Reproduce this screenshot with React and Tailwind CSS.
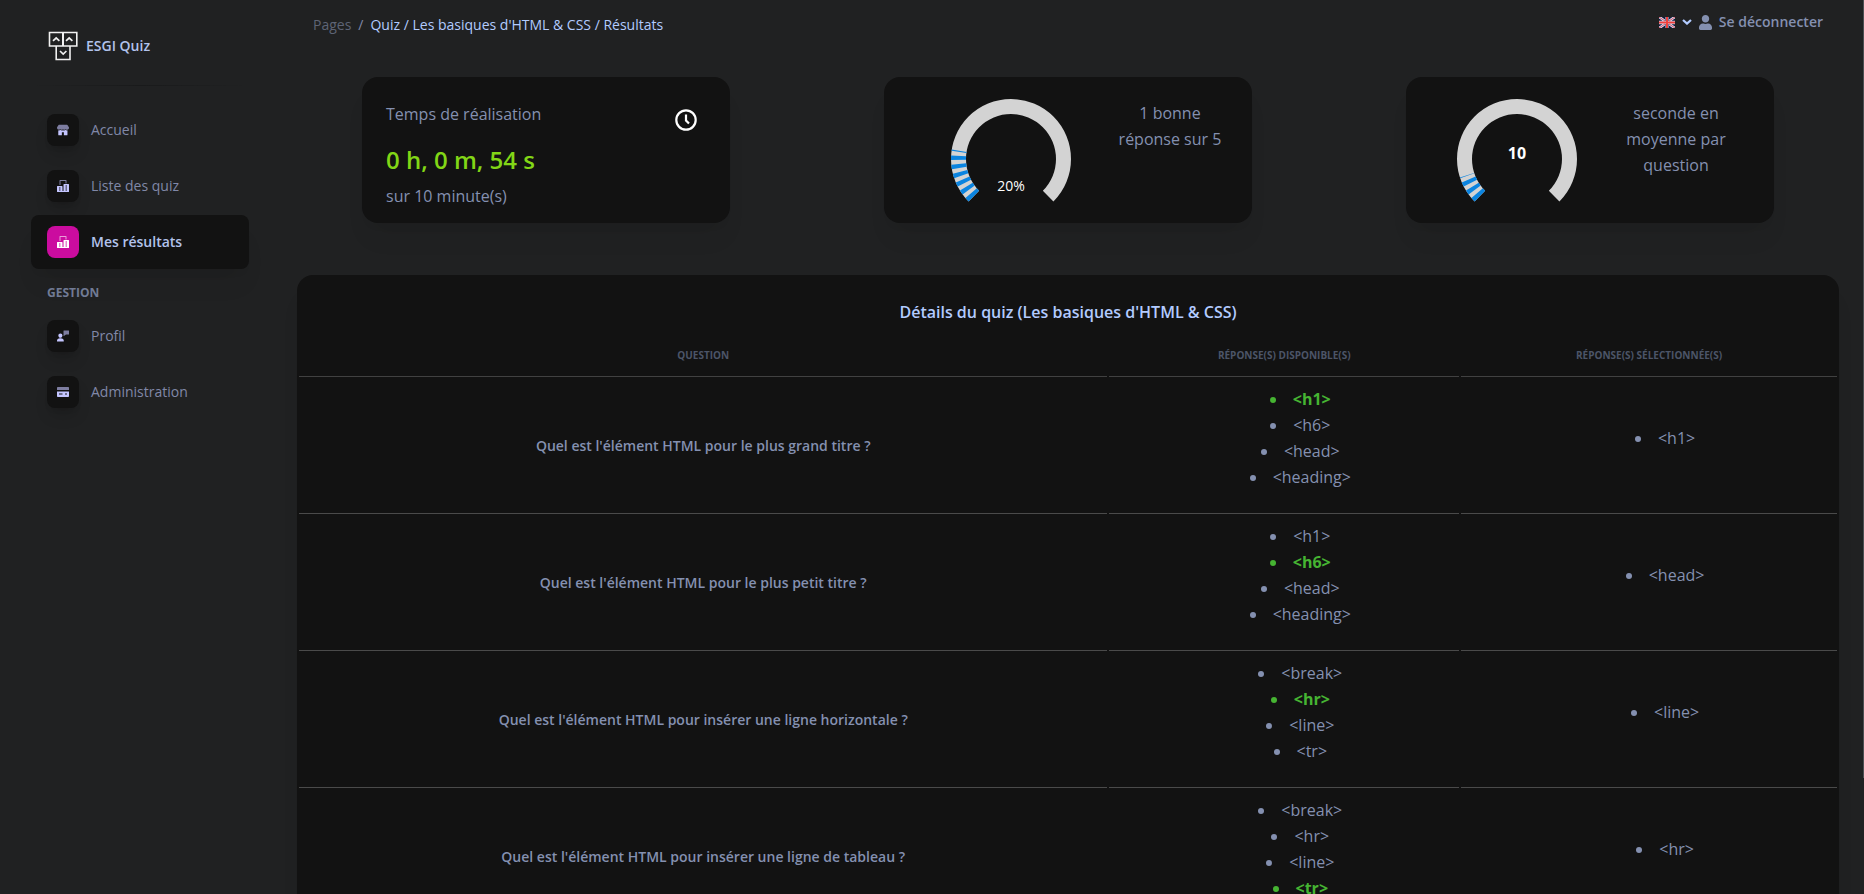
import React from "react";

const Shop = () => (
  <svg viewBox="0 0 47 42" className="size-3" aria-hidden="true">
    <path fill="#c4c5ff" opacity="0.6" d="M46.7 10.7 40.8 1A2 2 0 0 0 39 0H7.7A2 2 0 0 0 6 1L.3 10.7A2 2 0 0 0 0 11.7C0 16 3.4 19.6 7.8 19.6A8 8 0 0 0 13 17.8a8 8 0 0 0 10.4 0 8 8 0 0 0 10.4 0A7.8 7.8 0 0 0 47 11.7z" />
    <path fill="#c4c5ff" d="M39.2 22.5a12 12 0 0 1-5.5-1.3 12 12 0 0 1-10.3.6 12 12 0 0 1-10.4-.6 12 12 0 0 1-5.2 1.3A12 12 0 0 1 5 22.2V40a2 2 0 0 0 2 2h12V29.4h8V42h12a2 2 0 0 0 2-2V22.2z" />
  </svg>
);

const Office = ({ color }) => (
  <svg viewBox="0 0 42 42" className="size-3" fill={color} aria-hidden="true">
    <path opacity="0.6" d="M12.25 17.5H8.75V1.75C8.75.78 9.53 0 10.5 0H31.5C32.47 0 33.25.78 33.25 1.75V12.25H29.75V3.5H12.25z" />
    <path d="M40.25 14H24.5a1.75 1.75 0 0 0-1.75 1.75V38.5H19.25V22.75A1.75 1.75 0 0 0 17.5 21H1.75A1.75 1.75 0 0 0 0 22.75V40.25A1.75 1.75 0 0 0 1.75 42H40.25A1.75 1.75 0 0 0 42 40.25V15.75A1.75 1.75 0 0 0 40.25 14zM12.25 36.75H7V33.25H12.25zM12.25 29.75H7V26.25H12.25zM35 36.75H29.75V33.25H35zM35 29.75H29.75V26.25H35zM35 22.75H29.75V19.25H35z" />
  </svg>
);

const Support = () => (
  <svg viewBox="0 0 46 42" className="size-3" fill="#c4c5ff" aria-hidden="true">
    <path opacity="0.6" d="M45 0H26a1 1 0 0 0-1 1V20a1 1 0 0 0 1.6.8L34.3 15H45a1 1 0 0 0 1-1V1a1 1 0 0 0-1-1z" />
    <path d="M22.9 32.9C20.9 31.3 17.7 30 13 30S5 31.3 3.1 32.9A8.7 8.7 0 0 0 0 39.5V41a1 1 0 0 0 1 1H25a1 1 0 0 0 1-1V39.5A8.7 8.7 0 0 0 22.9 32.9zM13 28c4.4 0 8-4.6 8-9a8 8 0 0 0-16 0c0 4.4 3.6 9 8 9z" />
  </svg>
);

const Card = () => (
  <svg viewBox="0 0 43 36" className="size-3" fill="#c4c5ff" aria-hidden="true">
    <path opacity="0.6" d="M43 10.7V3.6C43 1.6 41.4 0 39.4 0H3.6C1.6 0 0 1.6 0 3.6V10.7z" />
    <path d="M0 16.1V32.3C0 34.3 1.6 35.8 3.6 35.8H39.4C41.4 35.8 43 34.3 43 32.3V16.1zM19.7 26.9H7.2V23.3H19.7zM35.8 26.9H28.7V23.3H35.8z" />
  </svg>
);

const Logo = () => (
  <svg viewBox="0 0 30 30" className="size-[30px]" fill="none" stroke="#f1f1f1" aria-hidden="true">
    <path strokeWidth="1.6" d="M1.5 1.5H14.8V15H1.5zM15.2 1.5H28.8V15H15.2zM8.2 15H22V28.5H8.2z" />
    <path strokeWidth="1.7" d="M5 9.8 8.2 7 11.4 9.8M18 9.8 21.2 7 24.4 9.8M12 20 15.2 23 18.4 20" />
  </svg>
);

const Flag = () => (
  <svg viewBox="0 0 16 11" className="h-[11px] w-4" aria-hidden="true">
    <path fill="#d3dcf5" d="M0 0H16V11H0z" />
    <path fill="#131a3a" d="M2.5 0H6V2.6zM10 2.6V0H13.5zM0 1.4V3.8H3.5zM16 1.4V3.8H12.5zM0 9.6V7.2H3.5zM16 9.6V7.2H12.5zM2.5 11H6V8.4zM10 8.4V11H13.5z" />
    <path stroke="#e03038" strokeWidth="0.8" d="M0 0 6 4M16 0 10 4M0 11 6 7M16 11 10 7" />
    <path fill="#131a3a" d="M6 0H7V4H6zM9 0H10V4H9zM6 7H7V11H6zM9 7H10V11H9z" opacity="0.5" />
    <path fill="#f0403c" d="M7 0H9V11H7zM0 4.5H16V6.5H0z" />
  </svg>
);

const NAV = [
  { label: "Accueil", icon: <Shop /> },
  { label: "Liste des quiz", icon: <Office color="#c4c5ff" /> },
  { label: "Mes résultats", icon: <Office color="#ffffff" />, active: true },
];
const MANAGE = [
  { label: "Profil", icon: <Support /> },
  { label: "Administration", icon: <Card /> },
];

function NavItem({ label, icon, active }) {
  return (
    <li>
      <a
        href="#"
        aria-current={active ? "page" : undefined}
        className={
          active
            ? "flex h-[54px] items-center gap-3 rounded-lg bg-[#121212] px-4 font-semibold text-[#b2c3ec] shadow-xl shadow-black/5"
            : "flex h-[54px] items-center gap-3 rounded-lg px-4 text-[#8088a8]"
        }
      >
        <span
          className={
            active
              ? "flex size-8 items-center justify-center rounded-lg bg-[#cb0c9f]"
              : "flex size-8 items-center justify-center rounded-lg bg-[#121212] shadow-lg shadow-black/15"
          }
        >
          {icon}
        </span>
        {label}
      </a>
    </li>
  );
}

const point = (r, deg) => {
  const a = (deg * Math.PI) / 180;
  return `${(60 + r * Math.cos(a)).toFixed(2)} ${(60 + r * Math.sin(a)).toFixed(2)}`;
};
const arc = (from, to) =>
  `M${point(60, from)}A60 60 0 ${to - from > 180 ? 1 : 0} 1 ${point(60, to)}L${point(45, to)}A45 45 0 ${to - from > 180 ? 1 : 0} 0 ${point(45, from)}z`;

function Gauge({ value, children }) {
  const end = 135 + 270 * value;
  const stripes = [];
  for (let a = 135; a < end; a += 8.8) stripes.push(arc(a, Math.min(a + 4.4, end)));
  return (
    <svg viewBox="0 0 120 120" className="size-[120px] shrink-0" role="img">
      <path fill="#d3d3d3" d={arc(135, 405)} />
      <path fill="#0a84e0" d={stripes.join("")} />
      {children}
    </svg>
  );
}

const STAT = "h-[146px] w-[368px] rounded-2xl bg-[#121212] shadow-xl shadow-black/5";

const ROWS = [
  { q: "Quel est l'élément HTML pour le plus grand titre ?", a: ["<h1>", "<h6>", "<head>", "<heading>"], ok: 0, s: "<h1>" },
  { q: "Quel est l'élément HTML pour le plus petit titre ?", a: ["<h1>", "<h6>", "<head>", "<heading>"], ok: 1, s: "<head>" },
  { q: "Quel est l'élément HTML pour insérer une ligne horizontale ?", a: ["<break>", "<hr>", "<line>", "<tr>"], ok: 1, s: "<line>" },
  { q: "Quel est l'élément HTML pour insérer une ligne de tableau ?", a: ["<break>", "<hr>", "<line>", "<tr>"], ok: 3, s: "<hr>" },
];

const TH = "border-b border-[#414141] pt-2 pb-[13px] text-[10px] leading-4 font-bold text-[#4c5568] uppercase";
const TD = "border-b border-[#4a4a4a] py-[7px] align-middle";

export default function App() {
  return (
    <div className="relative flex h-screen overflow-hidden bg-[#202122] font-['Open_Sans',sans-serif] text-[#8490b0]">
      <aside className="w-[281px] shrink-0 pr-8 pl-[31px] text-sm">
        <a href="#" className="flex items-center gap-2 pt-[31px] pl-[17px] font-semibold text-[#b2c3ec]">
          <Logo />
          ESGI Quiz
        </a>
        <hr className="mt-6 h-px border-0 bg-linear-to-r from-transparent via-[#191a1b] to-transparent" />
        <ul className="mt-[17px] flex flex-col gap-0.5">
          {NAV.map((n) => (
            <NavItem key={n.label} {...n} />
          ))}
        </ul>
        <h6 className="mt-4 pl-4 text-xs leading-4 font-bold text-[#717b95] uppercase">Gestion</h6>
        <ul className="mt-2 flex flex-col gap-0.5">
          {MANAGE.map((n) => (
            <NavItem key={n.label} {...n} />
          ))}
        </ul>
      </aside>

      <main className="min-w-0 flex-1 pr-[25px] pl-4">
        <nav className="flex justify-between px-4 pt-3 text-sm">
          <ol className="flex gap-[7px] leading-[26px]">
            <li className="text-[#5e6475]">Pages</li>
            <li className="text-[#8088a8]">/</li>
            <li className="text-[#b2cbff]">Quiz / Les basiques d'HTML &amp; CSS / Résultats</li>
          </ol>
          <div className="flex h-5 items-center">
            <button type="button" aria-label="Langue" className="flex items-center gap-[7px]">
              <Flag />
              <svg viewBox="0 0 10 6" className="h-[6px] w-[10px]" fill="none" stroke="#b2cbff" strokeWidth="2.2" aria-hidden="true">
                <path d="M1 1 5 4.6 9 1" />
              </svg>
            </button>
            <a href="#" className="ml-[7px] flex items-center gap-[7px] font-semibold">
              <svg viewBox="0 0 448 512" className="h-[15px] w-[13px]" fill="#8490b0" aria-hidden="true">
                <path d="M224 256c70.7 0 128-57.3 128-128S294.7 0 224 0 96 57.3 96 128s57.3 128 128 128zm89.6 32h-16.7c-22.2 10.2-46.9 16-72.9 16s-50.6-5.8-72.9-16h-16.7C60.2 288 0 348.2 0 422.4V464c0 26.5 21.5 48 48 48h352c26.5 0 48-21.5 48-48v-41.6c0-74.2-60.2-134.4-134.4-134.4z" />
              </svg>
              Se déconnecter
            </a>
          </div>
        </nav>

        <section className="-mx-3 mt-[39px] grid grid-cols-3 justify-items-center">
          <div className={STAT}>
            <div className="flex justify-between px-6 pt-6">
              <div>
                <p className="leading-[26px]">Temps de réalisation</p>
                <p className="mt-3 text-2xl leading-[42px] font-semibold text-[#82d616]">0 h, 0 m, 54 s</p>
                <p className="leading-[30px]">sur 10 minute(s)</p>
              </div>
              <svg viewBox="0 0 22 22" className="mt-2 mr-[9px] size-[22px]" fill="none" stroke="#ffffff" strokeWidth="2.2" aria-hidden="true">
                <circle cx="11" cy="11" r="9.7" />
                <path d="M11 5.5V11.5L14 14.5" />
              </svg>
            </div>
          </div>
          <div className={STAT}>
            <div className="flex justify-between pt-[22px] pr-[26px] pl-[67px]">
              <Gauge value={0.2}>
                <text x="60" y="92" textAnchor="middle" fill="#ffffff" className="text-sm">20%</text>
              </Gauge>
              <p className="mt-px w-[112px] text-center leading-[26px]">1 bonne réponse sur 5</p>
            </div>
          </div>
          <div className={STAT}>
            <div className="flex justify-between pt-[22px] pr-[42px] pl-[51px]">
              <Gauge value={0.1}>
                <text x="60" y="60" textAnchor="middle" fill="#ffffff" className="text-base font-bold">10</text>
              </Gauge>
              <p className="mt-px w-[112px] text-center leading-[26px]">seconde en moyenne par question</p>
            </div>
          </div>
        </section>

        <section className="mt-[52px] rounded-2xl bg-[#121212] pt-6 shadow-xl shadow-black/5">
          <h6 className="text-center leading-[26px] font-semibold text-[#b2cbff]">
            Détails du quiz (Les basiques d'HTML &amp; CSS)
          </h6>
          <table className="mt-3 w-full table-fixed border-separate border-spacing-0.5 text-center">
            <colgroup>
              <col className="w-[52.7%]" />
              <col className="w-[22.8%]" />
              <col />
            </colgroup>
            <thead>
              <tr>
                <th className={TH}>Question</th>
                <th className={TH}>Réponse(s) disponible(s)</th>
                <th className={TH}>Réponse(s) sélectionnée(s)</th>
              </tr>
            </thead>
            <tbody>
              {ROWS.map((r) => (
                <tr key={r.q}>
                  <td className={TD + " text-sm font-semibold"}>{r.q}</td>
                  <td className={TD}>
                    <ul className="mb-4 list-inside list-disc pl-8 leading-[26px]">
                      {r.a.map((t, i) => (
                        <li key={t} className={i === r.ok ? "font-bold text-[#46b432]" : ""}>
                          {t}
                        </li>
                      ))}
                    </ul>
                  </td>
                  <td className={TD}>
                    <ul className="mb-4 list-inside list-disc pl-8 leading-[26px]">
                      <li>{r.s}</li>
                    </ul>
                  </td>
                </tr>
              ))}
            </tbody>
          </table>
        </section>
      </main>
      <div className="absolute top-0 right-0 h-[87%] w-px bg-[#4b4f52]" />
    </div>
  );
}
